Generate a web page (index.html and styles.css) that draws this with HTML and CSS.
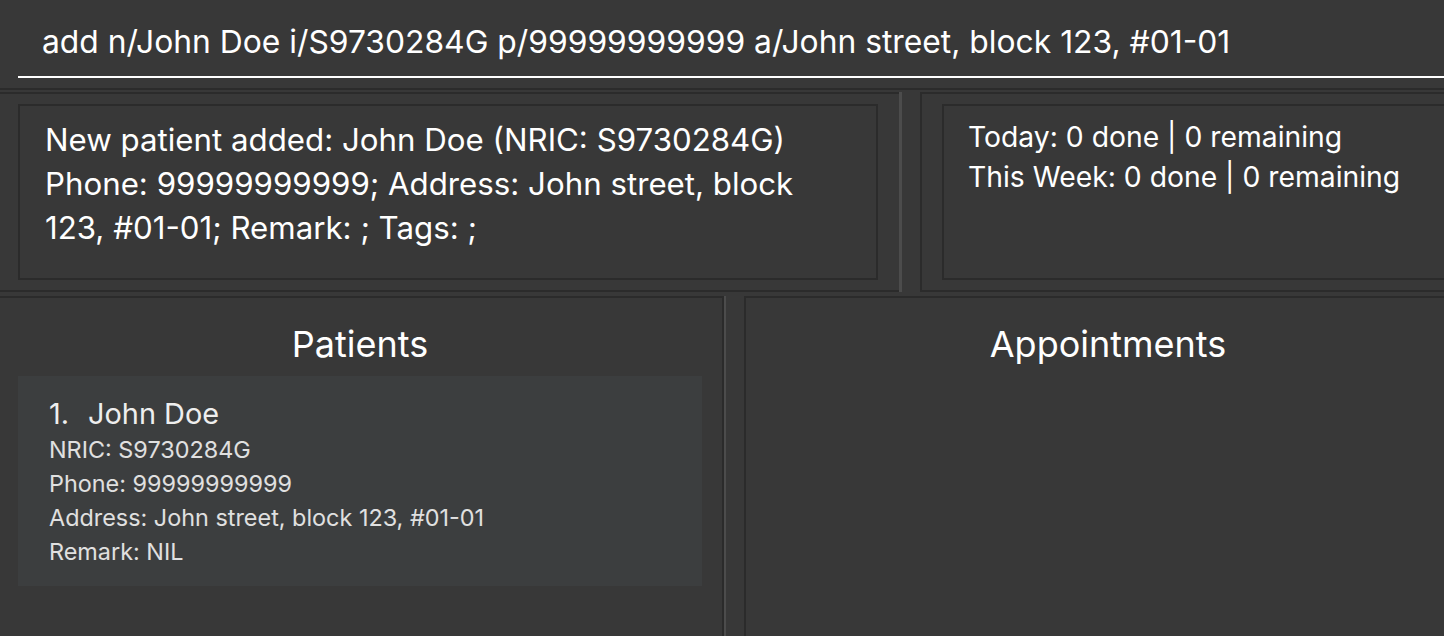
FILE: index.html
```html
<!DOCTYPE html>
<html>
<head>
<meta charset="utf-8">
<link rel="stylesheet" href="styles.css">
</head>
<body>
<div class="app">
  <div class="command-bar">
    <div class="command-input">add n/John Doe i/S9730284G p/99999999999 a/John street, block 123, #01-01</div>
  </div>
  <div class="top-section">
    <div class="result-pane">
      <div class="inner-box result-box">New patient added: John Doe (NRIC: S9730284G) Phone: 99999999999; Address: John street, block 123, #01-01; Remark: ; Tags: ;</div>
    </div>
    <div class="divider-top"></div>
    <div class="status-pane">
      <div class="inner-box status-box">
        <div>Today: 0 done | 0 remaining</div>
        <div>This Week: 0 done | 0 remaining</div>
      </div>
    </div>
  </div>
  <div class="bottom-section">
    <div class="list-pane">
      <div class="pane-title">Patients</div>
      <div class="card">
        <div class="card-name"><span class="card-index">1.</span>John Doe</div>
        <div class="card-line">NRIC: S9730284G</div>
        <div class="card-line">Phone: 99999999999</div>
        <div class="card-line">Address: John street, block 123, #01-01</div>
        <div class="card-line">Remark: NIL</div>
      </div>
    </div>
    <div class="divider-bottom"></div>
    <div class="appt-pane">
      <div class="pane-title">Appointments</div>
    </div>
  </div>
</div>
</body>
</html>
```
FILE: styles.css
```css
html, body {
  margin: 0;
  padding: 0;
  background: #383838;
  overflow: hidden;
}
body {
  width: 1444px;
  height: 636px;
  font-family: Inter, "Noto Sans", sans-serif;
  color: #ffffff;
}
.app {
  width: 1470px;
  height: 636px;
  display: flex;
  flex-direction: column;
}
.command-bar {
  border-bottom: 2px solid #2b2b2b;
  padding: 22px 0 0 18px;
  height: 66px;
}
.command-input {
  height: 54px;
  border-bottom: 2px solid #ffffff;
  padding-left: 24px;
  font-size: 31.8px;
  line-height: 40px;
  white-space: nowrap;
}
.top-section {
  margin-top: 2px;
  height: 200px;
  display: flex;
  flex-shrink: 0;
}
.result-pane {
  width: 899px;
  box-sizing: border-box;
  border-top: 2px solid #2b2b2b;
  border-bottom: 2px solid #2b2b2b;
  padding: 10px 21px 10px 18px;
  display: flex;
}
.divider-top {
  width: 3px;
  background: #4c4c4c;
}
.status-pane {
  flex: 1;
  margin-left: 18px;
  border: 2px solid #2b2b2b;
  border-right: none;
  padding: 10px 0 10px 20px;
  display: flex;
}
.inner-box {
  flex: 1;
  border: 2px solid #2b2b2b;
}
.result-box {
  padding: 12px 20px 0 25px;
  font-size: 31.25px;
  line-height: 44px;
}
.status-box {
  padding: 11px 0 0 24px;
  font-size: 28.3px;
  line-height: 40px;
}
.bottom-section {
  margin-top: 4px;
  flex: 1;
  display: flex;
}
.list-pane {
  width: 724px;
  box-sizing: border-box;
  border-top: 2px solid #2b2b2b;
  border-right: 2px solid #2b2b2b;
  padding: 0 20px 0 18px;
}
.divider-bottom {
  width: 2px;
  background: #4c4c4c;
}
.appt-pane {
  flex: 1;
  margin-left: 18px;
  border-top: 2px solid #2b2b2b;
  border-left: 2px solid #2b2b2b;
}
.pane-title {
  text-align: center;
  font-size: 36px;
  line-height: 44px;
  padding-top: 24px;
  height: 78px;
  box-sizing: border-box;
}
.card {
  background: #3c3e3f;
  padding: 20px 0 16px 31px;
  height: 210px;
  box-sizing: border-box;
}
.card-name {
  font-size: 28.9px;
  line-height: 36px;
  color: #eeeeee;
  margin-bottom: 1px;
}
.card-index {
  display: inline-block;
  width: 39px;
}
.card-line {
  font-size: 23.4px;
  line-height: 34px;
  color: #e0e0e0;
}
```
